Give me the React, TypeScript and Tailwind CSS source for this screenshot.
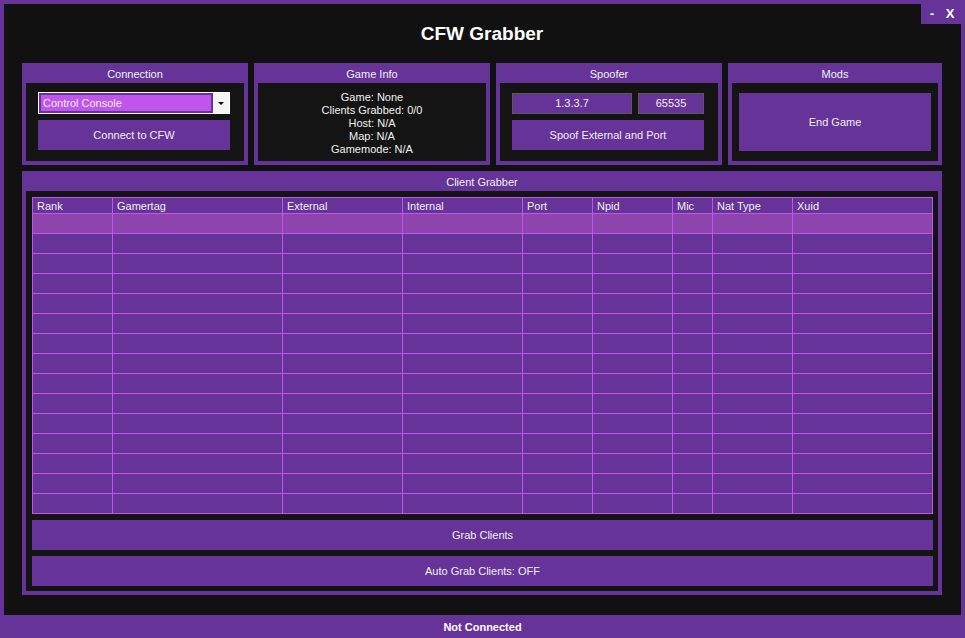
const columns = [
  { name: "Rank", w: 80 },
  { name: "Gamertag", w: 170 },
  { name: "External", w: 120 },
  { name: "Internal", w: 120 },
  { name: "Port", w: 70 },
  { name: "Npid", w: 80 },
  { name: "Mic", w: 40 },
  { name: "Nat Type", w: 80 },
  { name: "Xuid", w: 140 },
];

const rows = Array.from({ length: 15 }, (_, i) => i);

function Group({ title, width, children }: { title: string; width: string; children: React.ReactNode }) {
  return (
    <div className={`${width} flex flex-col bg-[#663399] px-[4px] pb-[4px]`}>
      <div className="h-[20px] pt-[2px] flex items-center justify-center text-[#f0f0f0]">{title}</div>
      <div className="flex-1 bg-[#141414]">{children}</div>
    </div>
  );
}

function PurpleButton({ label, className }: { label: string; className: string }) {
  return (
    <button className={`${className} bg-[#663399] text-[#f0f0f0] flex items-center justify-center`}>
      {label}
    </button>
  );
}

export default function App() {
  return (
    <div
      className="w-[965px] h-[638px] bg-[#663399] flex flex-col pt-[4px] px-[4px] text-[11px] text-[#f0f0f0]"
      style={{ fontFamily: '"Liberation Sans", Arial, sans-serif' }}
    >
      <div className="h-[611px] bg-[#111111] flex flex-col pl-[18px] pr-[19px]">
        {/* title bar */}
        <div className="h-[20px] flex justify-end -mr-[19px]">
          <div className="w-[40px] h-[20px] bg-[#663399] flex items-center font-bold text-white">
            <span className="w-[20px] text-center text-[12px] pl-[2px]">-</span>
            <span className="w-[20px] text-center text-[13px] pr-[2px]">X</span>
          </div>
        </div>
        <div className="h-[39px] flex justify-center">
          <h1 className="text-[19px] font-bold text-white leading-[18px] mt-[1px]">CFW Grabber</h1>
        </div>

        {/* groups row */}
        <div className="flex gap-[6px] h-[102px]">
          <Group title="Connection" width="w-[226px]">
            <div className="pt-[9px] pl-[12px] flex flex-col gap-[6px]">
              <div className="w-[192px] h-[22px] bg-[#f4f4f4] border border-white flex">
                <div className="w-[174px] h-full bg-[#663399] p-[2px]">
                  <div className="h-full bg-[#bf55ec] text-[#f0f0f0] flex items-center pl-[2px]">Control Console</div>
                </div>
                <div className="flex-1 flex items-center justify-center pt-[1px]">
                  <svg width="6" height="4" viewBox="0 0 6 4">
                    <path d="M0 0 L6 0 L3 3 Z" fill="#000" />
                  </svg>
                </div>
              </div>
              <PurpleButton label="Connect to CFW" className="w-[192px] h-[30px]" />
            </div>
          </Group>

          <Group title="Game Info" width="w-[236px]">
            <div className="h-full flex flex-col items-center justify-center leading-[13px] pt-[3px]">
              <span>Game: None</span>
              <span>Clients Grabbed: 0/0</span>
              <span>Host: N/A</span>
              <span>Map: N/A</span>
              <span>Gamemode: N/A</span>
            </div>
          </Group>

          <Group title="Spoofer" width="w-[226px]">
            <div className="pt-[10px] pl-[12px] flex flex-col gap-[6px]">
              <div className="flex gap-[6px]">
                <div className="w-[120px] h-[21px] bg-[#663399] border border-[#5a5a5a] flex items-center justify-center">1.3.3.7</div>
                <div className="w-[66px] h-[21px] bg-[#663399] border border-[#5a5a5a] flex items-center justify-center">65535</div>
              </div>
              <PurpleButton label="Spoof External and Port" className="w-[192px] h-[30px]" />
            </div>
          </Group>

          <Group title="Mods" width="w-[214px]">
            <div className="pt-[10px] pl-[7px]">
              <PurpleButton label="End Game" className="w-[192px] h-[58px]" />
            </div>
          </Group>
        </div>

        {/* client grabber */}
        <div className="mt-[6px] w-[920px] h-[424px] bg-[#663399] flex flex-col px-[4px] pb-[4px]">
          <div className="h-[20px] pt-[2px] flex items-center justify-center">Client Grabber</div>
          <div className="flex-1 bg-[#141414] pt-[6px] pl-[6px] pr-[5px] flex flex-col">
            <div className="w-[901px] border-r border-b border-[#bf55ec] bg-[#663399]">
              <div className="grid grid-cols-[80px_170px_120px_120px_70px_80px_40px_80px_140px]">
                {columns.map((c) => (
                  <div key={c.name} className="h-[16px] border-l border-t border-[#bf55ec] pl-[4px] pt-[1px] flex items-center">
                    {c.name}
                  </div>
                ))}
                {rows.map((r) =>
                  columns.map((c) => (
                    <div
                      key={`${r}-${c.name}`}
                      className={`h-[20px] border-l border-t border-[#bf55ec] ${r === 0 ? "bg-[#8e44ad]" : ""}`}
                    />
                  ))
                )}
              </div>
            </div>
            <PurpleButton label="Grab Clients" className="mt-[6px] w-[901px] h-[30px]" />
            <PurpleButton label="Auto Grab Clients: OFF" className="mt-[6px] w-[901px] h-[30px]" />
          </div>
        </div>
      </div>

      {/* status bar */}
      <div className="h-[23px] pt-[2px] flex items-center justify-center font-bold text-white">Not Connected</div>
    </div>
  );
}
